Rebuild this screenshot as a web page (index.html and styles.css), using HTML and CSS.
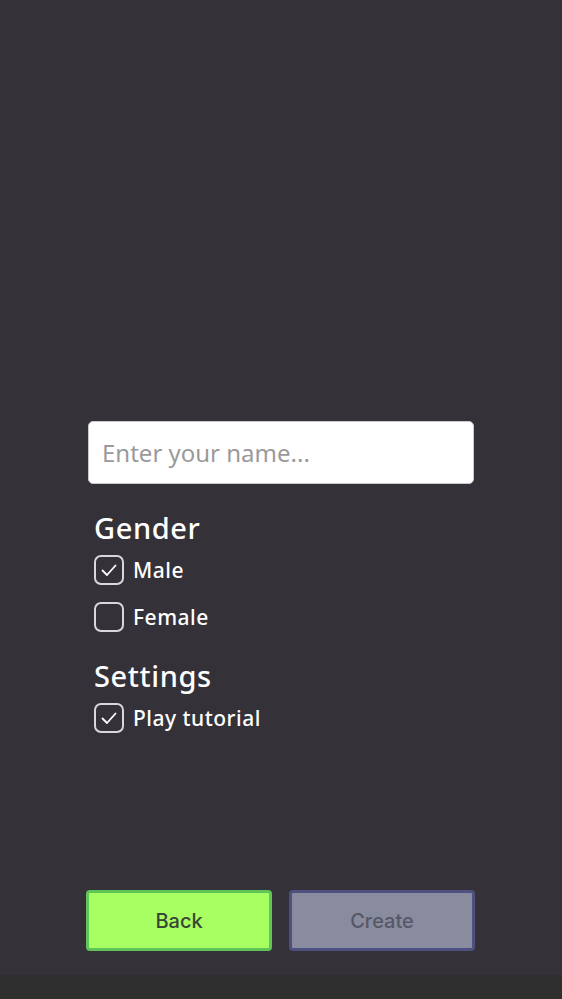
FILE: index.html
```html
<!DOCTYPE html>
<html lang="en">
<head>
<meta charset="utf-8">
<title>Create character</title>
<link rel="stylesheet" href="styles.css">
</head>
<body>
<div class="screen">
  <form class="form">
    <input class="name-input" type="text" placeholder="Enter your name...">
    <section class="group">
      <h2 class="group-title">Gender</h2>
      <label class="option">
        <span class="box checked"><svg viewBox="0 0 30 30" width="30" height="30"><path d="M8.5 15.5l4.5 4.5 8.5-9.5" fill="none" stroke="#fff" stroke-width="1.8" stroke-linecap="round" stroke-linejoin="round"/></svg></span>
        <span class="option-text">Male</span>
      </label>
      <label class="option">
        <span class="box"></span>
        <span class="option-text">Female</span>
      </label>
    </section>
    <section class="group settings">
      <h2 class="group-title">Settings</h2>
      <label class="option">
        <span class="box checked"><svg viewBox="0 0 30 30" width="30" height="30"><path d="M8.5 15.5l4.5 4.5 8.5-9.5" fill="none" stroke="#fff" stroke-width="1.8" stroke-linecap="round" stroke-linejoin="round"/></svg></span>
        <span class="option-text">Play tutorial</span>
      </label>
    </section>
  </form>
  <div class="actions">
    <button class="btn btn-back" type="button">Back</button>
    <button class="btn btn-create" type="button">Create</button>
  </div>
</div>
<div class="bottom-bar"></div>
</body>
</html>
```
FILE: styles.css
```css
html, body {
  margin: 0;
  padding: 0;
}
body {
  width: 562px;
  height: 999px;
  background: #343238;
  font-family: "Noto Sans", sans-serif;
  color: #fff;
  overflow: hidden;
}
.screen {
  height: 975px;
  display: flex;
  flex-direction: column;
  box-sizing: border-box;
  padding-bottom: 24px;
}
.form {
  margin: 421px 0 0 88px;
  width: 386px;
  display: flex;
  flex-direction: column;
}
.name-input {
  box-sizing: border-box;
  width: 386px;
  height: 63px;
  border: 1px solid #c9c9cc;
  border-radius: 5px;
  background: #fff;
  padding: 0 13px;
  font-family: "Noto Sans", sans-serif;
  font-size: 24px;
  color: #333;
  outline: none;
}
.name-input::placeholder {
  color: #9a9a9a;
}
.group {
  margin-top: 24px;
  padding-left: 6px;
  display: flex;
  flex-direction: column;
  gap: 17px;
}
.settings {
  margin-top: 24px;
}
.group-title {
  margin: 0 0 -10px 0;
  font-size: 29px;
  font-weight: 500;
  line-height: 40px;
  letter-spacing: 0.6px;
}
.option {
  display: flex;
  align-items: center;
  gap: 9px;
  height: 30px;
}
.box {
  box-sizing: border-box;
  width: 30px;
  height: 30px;
  border: 2px solid #d8d8dc;
  border-radius: 7px;
  display: flex;
  align-items: center;
  justify-content: center;
}
.box svg {
  flex: none;
}
.option-text {
  font-size: 21px;
  font-weight: 500;
  letter-spacing: 0.5px;
}
.actions {
  margin-top: auto;
  margin-left: 86px;
  display: flex;
  gap: 17px;
}
.btn {
  box-sizing: border-box;
  width: 186px;
  height: 61px;
  border-radius: 4px;
  border: 3px solid;
  font-family: "Inter", sans-serif;
  font-size: 20px;
  font-weight: 500;
}
.btn-back {
  background: #a8ff62;
  border-color: #5fc558;
  color: #3a4538;
}
.btn-create {
  background: #898b9f;
  border-color: #4e5180;
  color: #565868;
}
.bottom-bar {
  height: 24px;
  background: #2f2f30;
}
```
